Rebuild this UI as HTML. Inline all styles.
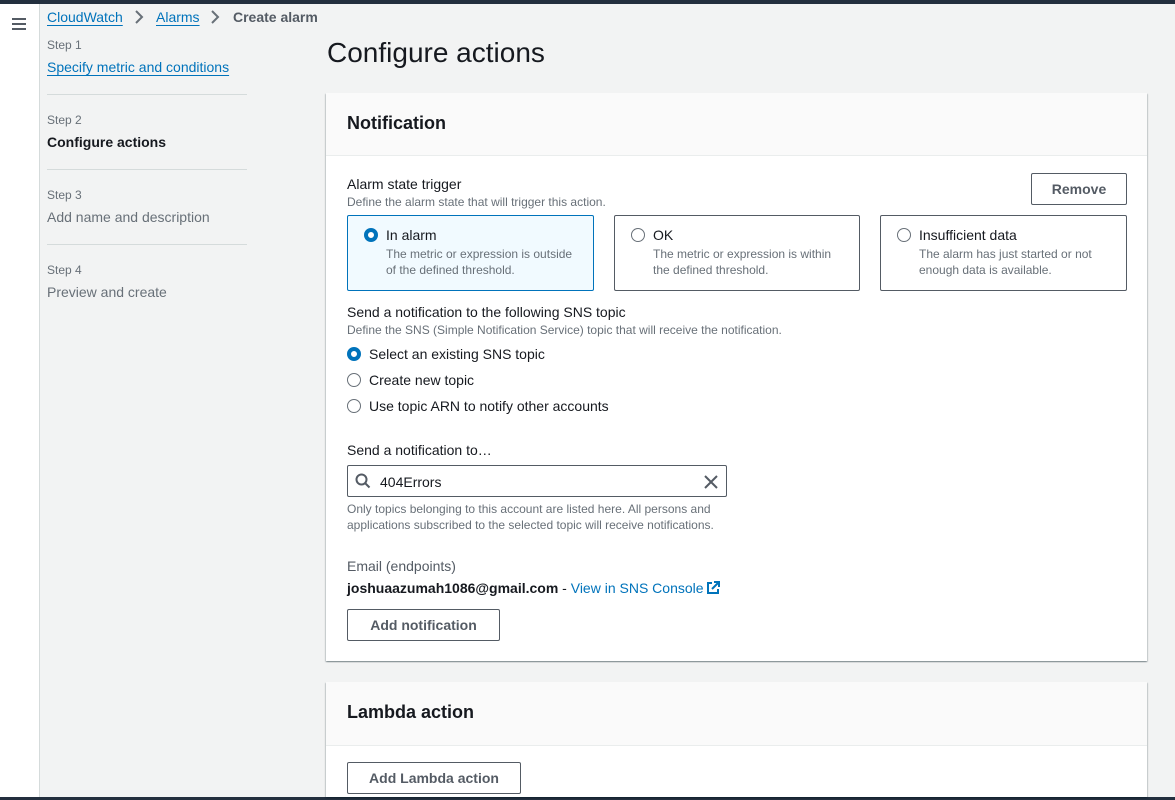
<!DOCTYPE html>
<html><head><meta charset="utf-8"><style>
*{box-sizing:border-box;margin:0;padding:0}
body{width:1175px;height:800px;overflow:hidden;background:#f2f3f3;font-family:"Liberation Sans",sans-serif;color:#16191f;position:relative}
.a{position:absolute;white-space:nowrap}
.link{color:#0073bb;text-decoration:underline;text-underline-offset:3px}
.sm{font-size:12px;color:#687078}
.btn{position:absolute;border:1px solid #545b64;border-radius:2px;background:#fff;font-weight:bold;font-size:14px;color:#545b64;text-align:center}
.card{position:absolute;border:1px solid #545b64;border-radius:2px;background:#fff}
.rad{position:absolute;width:14px;height:14px;border:1.5px solid #687078;border-radius:50%;background:#fff}
.rad.on{border:4px solid #0073bb}
</style></head><body>
<div class="a" style="left:0;top:0;width:1175px;height:4px;background:#232f3e"></div>
<div class="a" style="left:0;top:797px;width:1175px;height:3px;background:#232f3e"></div>
<div class="a" style="left:0;top:4px;width:40px;height:793px;background:#fff;border-right:1px solid #d5dbdb"></div>
<div class="a" style="left:12px;top:18px;width:14px;height:2px;background:#545b64"></div>
<div class="a" style="left:12px;top:23px;width:14px;height:2px;background:#545b64"></div>
<div class="a" style="left:12px;top:28px;width:14px;height:2px;background:#545b64"></div>

<div class="a link" style="left:47px;top:9px;font-size:14px">CloudWatch</div>
<svg class="a" style="left:133px;top:10px" width="12" height="14"><path d="M3 1l6 6-6 6" fill="none" stroke="#687078" stroke-width="2"/></svg>
<div class="a link" style="left:156px;top:9px;font-size:14px">Alarms</div>
<svg class="a" style="left:209px;top:10px" width="12" height="14"><path d="M3 1l6 6-6 6" fill="none" stroke="#687078" stroke-width="2"/></svg>
<div class="a" style="left:233px;top:9px;font-size:14px;font-weight:bold;color:#545b64">Create alarm</div>

<div class="a sm" style="left:47px;top:38px;font-size:12px">Step 1</div>
<div class="a link" style="left:47px;top:59px;font-size:14px">Specify metric and conditions</div>
<div class="a" style="left:47px;top:94px;width:200px;height:1px;background:#d5dbdb"></div>
<div class="a sm" style="left:47px;top:113px;font-size:12px">Step 2</div>
<div class="a" style="left:47px;top:134px;font-size:14px;font-weight:bold">Configure actions</div>
<div class="a" style="left:47px;top:169px;width:200px;height:1px;background:#d5dbdb"></div>
<div class="a sm" style="left:47px;top:188px;font-size:12px">Step 3</div>
<div class="a" style="left:47px;top:209px;font-size:14px;color:#687078">Add name and description</div>
<div class="a" style="left:47px;top:244px;width:200px;height:1px;background:#d5dbdb"></div>
<div class="a sm" style="left:47px;top:263px;font-size:12px">Step 4</div>
<div class="a" style="left:47px;top:284px;font-size:14px;color:#687078">Preview and create</div>

<div class="a" style="left:327px;top:37px;font-size:28px">Configure actions</div>

<div class="a" style="left:326px;top:93px;width:821px;height:568px;background:#fff;box-shadow:0 1px 1px rgba(0,28,36,.3),1px 1px 1px rgba(0,28,36,.15),-1px 1px 1px rgba(0,28,36,.15)"></div>
<div class="a" style="left:326px;top:93px;width:821px;height:63px;background:#fafafa;border-bottom:1px solid #eaeded"></div>
<div class="a" style="left:347px;top:113px;font-size:18px;font-weight:bold">Notification</div>

<div class="a" style="left:347px;top:176px;font-size:14px">Alarm state trigger</div>
<div class="a sm" style="left:347px;top:195px">Define the alarm state that will trigger this action.</div>
<div class="btn" style="left:1031px;top:173px;width:96px;height:32px;line-height:30px">Remove</div>

<div class="card" style="left:347px;top:215px;width:247px;height:76px;border-color:#0073bb;background:#f1faff"></div>
<div class="rad on" style="left:364px;top:228px"></div>
<div class="a" style="left:386px;top:227px;font-size:14px">In alarm</div>
<div class="a sm" style="left:386px;top:246px;line-height:16px">The metric or expression is outside<br>of the defined threshold.</div>

<div class="card" style="left:614px;top:215px;width:246px;height:76px"></div>
<div class="rad" style="left:631px;top:228px"></div>
<div class="a" style="left:653px;top:227px;font-size:14px">OK</div>
<div class="a sm" style="left:653px;top:246px;line-height:16px">The metric or expression is within<br>the defined threshold.</div>

<div class="card" style="left:880px;top:215px;width:247px;height:76px"></div>
<div class="rad" style="left:897px;top:228px"></div>
<div class="a" style="left:919px;top:227px;font-size:14px">Insufficient data</div>
<div class="a sm" style="left:919px;top:246px;line-height:16px">The alarm has just started or not<br>enough data is available.</div>

<div class="a" style="left:347px;top:304px;font-size:14px">Send a notification to the following SNS topic</div>
<div class="a sm" style="left:347px;top:323px">Define the SNS (Simple Notification Service) topic that will receive the notification.</div>
<div class="rad on" style="left:347px;top:347px"></div>
<div class="a" style="left:369px;top:346px;font-size:14px">Select an existing SNS topic</div>
<div class="rad" style="left:347px;top:373px"></div>
<div class="a" style="left:369px;top:372px;font-size:14px">Create new topic</div>
<div class="rad" style="left:347px;top:399px"></div>
<div class="a" style="left:369px;top:398px;font-size:14px">Use topic ARN to notify other accounts</div>

<div class="a" style="left:347px;top:442px;font-size:14px">Send a notification to…</div>
<div class="a" style="left:347px;top:465px;width:380px;height:32px;border:1px solid #545b64;border-radius:2px;background:#fff"></div>
<svg class="a" style="left:355px;top:473px" width="16" height="16"><circle cx="6.5" cy="6.5" r="5" fill="none" stroke="#545b64" stroke-width="2"/><path d="M10 10l4.5 4.5" stroke="#545b64" stroke-width="2"/></svg>
<div class="a" style="left:380px;top:474px;font-size:14px">404Errors</div>
<svg class="a" style="left:703px;top:474px" width="16" height="16"><path d="M2 2l12 12M14 2L2 14" stroke="#545b64" stroke-width="2"/></svg>
<div class="a sm" style="left:347px;top:501px;line-height:16px">Only topics belonging to this account are listed here. All persons and<br>applications subscribed to the selected topic will receive notifications.</div>

<div class="a" style="left:347px;top:558px;font-size:14px;color:#545b64">Email (endpoints)</div>
<div class="a" style="left:347px;top:580px;font-size:14px"><b>joshuaazumah1086@gmail.com</b> - <span style="color:#0073bb">View in SNS Console</span></div>
<svg class="a" style="left:705px;top:580px" width="16" height="16"><path d="M7 3H3v10h10V9" fill="none" stroke="#0073bb" stroke-width="2"/><path d="M9 2h5v5M14 2L7 9" fill="none" stroke="#0073bb" stroke-width="2"/></svg>
<div class="btn" style="left:347px;top:609px;width:153px;height:32px;line-height:30px">Add notification</div>

<div class="a" style="left:326px;top:682px;width:821px;height:115px;background:#fff;box-shadow:0 1px 1px rgba(0,28,36,.3),1px 1px 1px rgba(0,28,36,.15),-1px 1px 1px rgba(0,28,36,.15)"></div>
<div class="a" style="left:326px;top:682px;width:821px;height:64px;background:#fafafa;border-bottom:1px solid #eaeded"></div>
<div class="a" style="left:347px;top:702px;font-size:18px;font-weight:bold">Lambda action</div>
<div class="btn" style="left:347px;top:762px;width:174px;height:32px;line-height:30px">Add Lambda action</div>
</body></html>
